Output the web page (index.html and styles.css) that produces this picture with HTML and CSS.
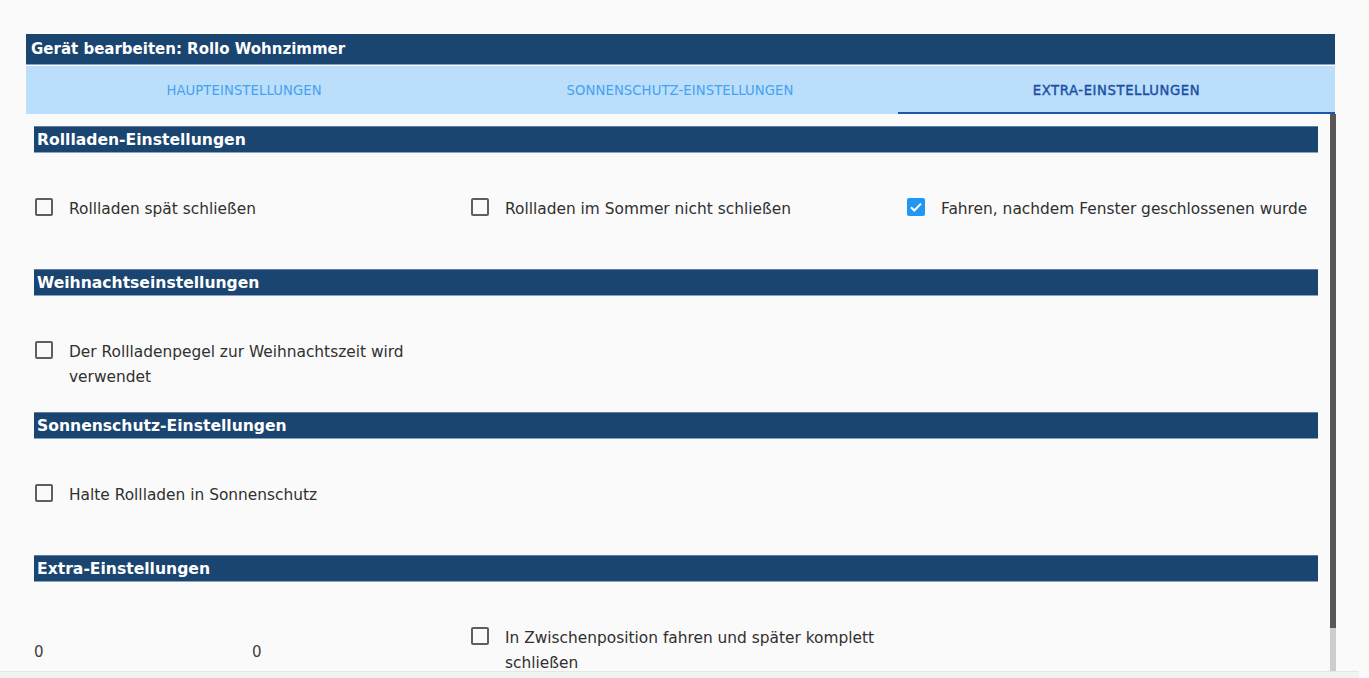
FILE: index.html
```html
<!DOCTYPE html>
<html lang="de">
<head>
<meta charset="utf-8">
<title>Gerät bearbeiten</title>
<link rel="stylesheet" href="styles.css">
</head>
<body>
<div class="page">
  <div class="dialog">
    <div class="dialog-title">Gerät bearbeiten: Rollo Wohnzimmer</div>
    <div class="tabs">
      <div class="tab">Haupteinstellungen</div>
      <div class="tab">Sonnenschutz-Einstellungen</div>
      <div class="tab active">Extra-Einstellungen</div>
    </div>
    <div class="dialog-body">
      <div class="content">
        <section class="section">
          <h2 class="section-head">Rollladen-Einstellungen</h2>
          <div class="section-body grid">
            <label class="check"><span class="box"></span><span class="label">Rollladen spät schließen</span></label>
            <label class="check"><span class="box"></span><span class="label">Rollladen im Sommer nicht schließen</span></label>
            <label class="check"><span class="box checked"><svg viewBox="0 0 18 18" width="18" height="18"><path d="M4 9.2l3.3 3.3L14 5.6" fill="none" stroke="#fff" stroke-width="2"/></svg></span><span class="label">Fahren, nachdem Fenster geschlossenen wurde</span></label>
          </div>
        </section>
        <section class="section">
          <h2 class="section-head">Weihnachtseinstellungen</h2>
          <div class="section-body grid">
            <label class="check"><span class="box"></span><span class="label">Der Rollladenpegel zur Weihnachtszeit wird verwendet</span></label>
          </div>
        </section>
        <section class="section">
          <h2 class="section-head">Sonnenschutz-Einstellungen</h2>
          <div class="section-body grid">
            <label class="check"><span class="box"></span><span class="label">Halte Rollladen in Sonnenschutz</span></label>
          </div>
        </section>
        <section class="section">
          <h2 class="section-head">Extra-Einstellungen</h2>
          <div class="section-body grid">
            <div class="values">
              <span class="value">0</span>
              <span class="value">0</span>
            </div>
            <label class="check"><span class="box"></span><span class="label">In Zwischenposition fahren und später komplett schließen</span></label>
          </div>
        </section>
      </div>
      <div class="scrollbar"><div class="thumb"></div></div>
    </div>
  </div>
  <div class="bottom-strip"></div>
</div>
</body>
</html>
```
FILE: styles.css
```css
html, body {
  margin: 0;
  padding: 0;
  background: #fafafa;
  font-family: "DejaVu Sans", "Liberation Sans", sans-serif;
  color: #303030;
  overflow: hidden;
}

.page {
  width: 1369px;
  height: 678px;
  padding-top: 34px;
  box-sizing: border-box;
}

.dialog {
  margin-left: 26px;
  width: 1310px;
}

.dialog-title {
  width: 1309px;
  height: 31px;
  background: #1a4571;
  color: #fff;
  font-weight: bold;
  font-size: 15px;
  line-height: 31px;
  padding-left: 5px;
  box-sizing: border-box;
  border-bottom: 1px solid #8aa3bf;
  margin-bottom: 1px;
}

.tabs {
  width: 1309px;
  height: 48px;
  display: grid;
  grid-template-columns: 436px 436px 437px;
  background: #bbdefb;
}

.tab {
  text-transform: uppercase;
  font-size: 13.2px;
  color: #45a2f0;
  display: flex;
  align-items: center;
  justify-content: center;
  padding-top: 3px;
  padding-bottom: 2px;
  letter-spacing: 0.1px;
}

.tab.active {
  color: #1b4fa3;
  -webkit-text-stroke: 0.4px #1b4fa3;
  letter-spacing: 0.6px;
  border-bottom: 2px solid #1e56a8;
  padding-bottom: 0;
}

.dialog-body {
  display: flex;
  height: 557px;
  overflow: hidden;
}

.content {
  width: 1304px;
  padding: 12px 12px 0 8px;
  box-sizing: border-box;
  overflow: hidden;
}

.section-head {
  margin: 0;
  height: 27px;
  background: #1a4571;
  color: #fff;
  font-size: 15.6px;
  font-weight: bold;
  line-height: 28px;
  padding-left: 3px;
  box-shadow: inset 0 1px 0 #5d7fa5, inset 0 -1px 0 #8aa3bf;
}

.section-body {
  min-height: 116px;
  padding-top: 44px;
  box-sizing: border-box;
}

.grid {
  display: grid;
  grid-template-columns: 436px 436px 436px;
  align-items: start;
}

.check {
  display: flex;
  align-items: flex-start;
  gap: 16px;
  font-size: 15.4px;
  line-height: 25px;
}

.box {
  flex: none;
  width: 18px;
  height: 18px;
  margin-top: 1px;
  margin-left: 1px;
  box-sizing: border-box;
  border: 2px solid #5e5e5e;
  border-radius: 2px;
  display: flex;
}

.box.checked {
  background: #2196f3;
  border-color: #2196f3;
}

.box.checked svg {
  margin: -2px;
}

.values {
  display: grid;
  grid-template-columns: 218px 218px;
  padding-top: 14px;
  font-size: 15px;
  line-height: 25px;
  color: #404040;
}

.scrollbar {
  width: 6px;
  background: #cdcdcd;
  display: flex;
  flex-direction: column;
}

.thumb {
  height: 514px;
  background: #575757;
}

.bottom-strip {
  width: 1359px;
  height: 7px;
  border-top: 1px solid #e6e6e6;
  background: #f2f2f2;
}
```
